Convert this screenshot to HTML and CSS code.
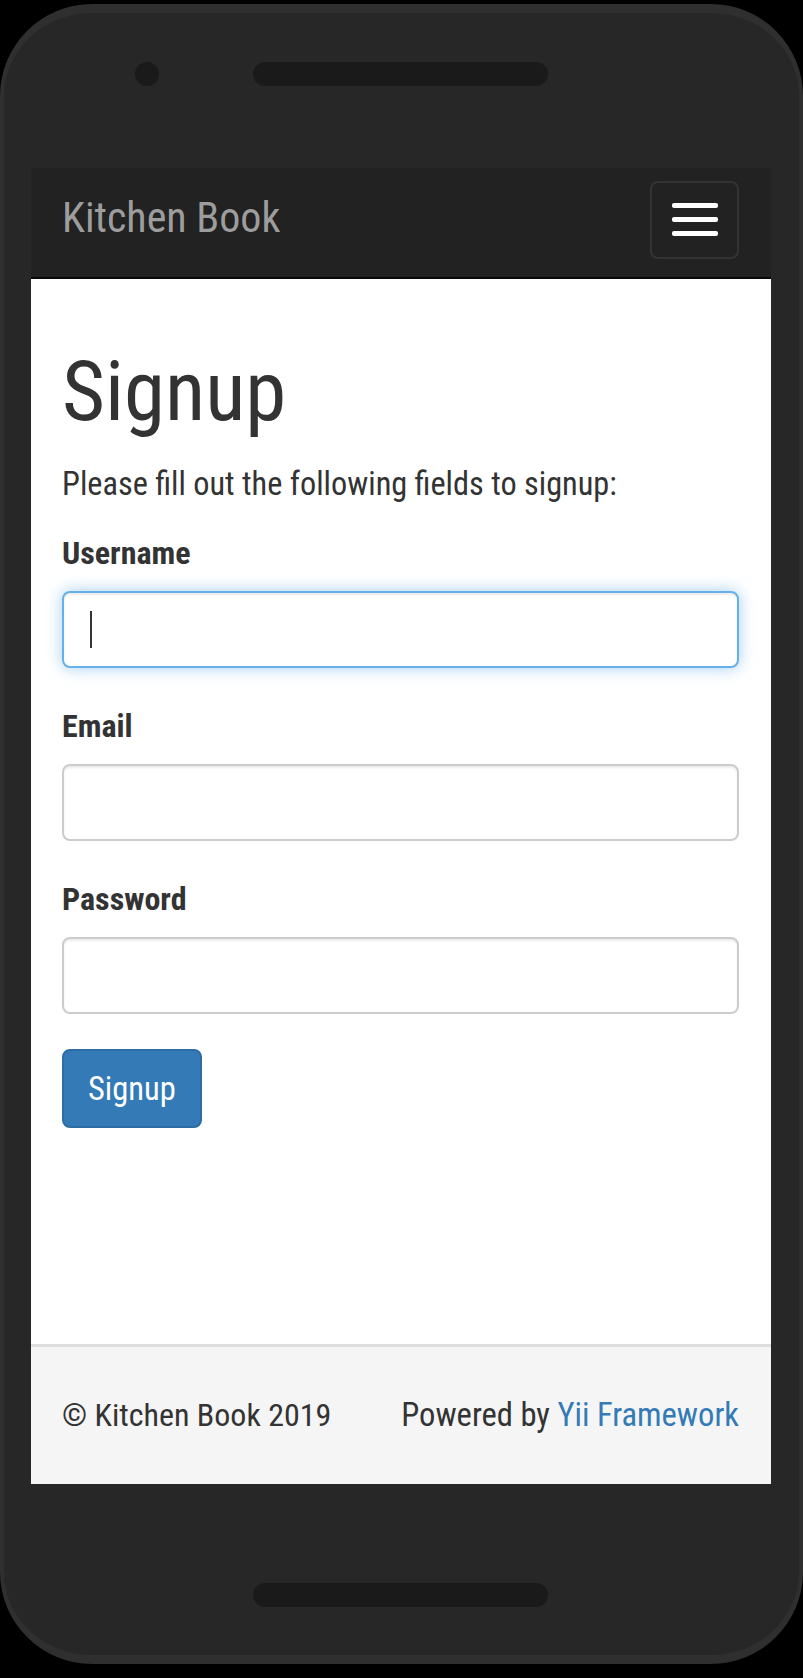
FILE: index.html
```html
<!DOCTYPE html>
<html lang="en">
<head>
<meta charset="utf-8">
<title>Signup - Kitchen Book</title>
<link rel="stylesheet" href="styles.css">
</head>
<body>
<div class="phone">
  <div class="phone-top">
    <span class="camera"></span>
    <span class="speaker"></span>
  </div>
  <div class="screen">
    <nav class="navbar">
      <a class="brand" href="#">Kitchen Book</a>
      <button class="toggle" type="button" aria-label="Toggle navigation">
        <span class="bar"></span>
        <span class="bar"></span>
        <span class="bar"></span>
      </button>
    </nav>
    <main class="content">
      <h1 class="title">Signup</h1>
      <p class="lead">Please fill out the following fields to signup:</p>
      <form class="form">
        <div class="group">
          <label class="label" for="username">Username</label>
          <div class="field">
            <input class="input input-focus" id="username" type="text">
            <span class="caret"></span>
          </div>
        </div>
        <div class="group">
          <label class="label" for="email">Email</label>
          <input class="input" id="email" type="text">
        </div>
        <div class="group">
          <label class="label" for="password">Password</label>
          <input class="input" id="password" type="password">
        </div>
        <div class="group">
          <button class="btn" type="button">Signup</button>
        </div>
      </form>
    </main>
    <footer class="footer">
      <span class="copy">© Kitchen Book 2019</span>
      <span class="powered">Powered by <a class="link" href="#">Yii Framework</a></span>
    </footer>
  </div>
  <div class="phone-bottom">
    <span class="speaker"></span>
  </div>
</div>
</body>
</html>
```
FILE: styles.css
```css
* { box-sizing: border-box; }

html, body {
  margin: 0;
  padding: 0;
  background: #000;
}

body {
  font-family: "Roboto Condensed", Roboto, "Liberation Sans", sans-serif;
  color: #333;
}

.phone {
  width: 803px;
  height: 1660px;
  margin-top: 4px;
  background: #272727;
  border: 4px solid #2f2f2f;
  border-top-width: 9px;
  border-bottom-width: 9px;
  border-radius: 92px;
  display: flex;
  flex-direction: column;
}

.phone-top {
  height: 155px;
  padding-top: 49px;
  display: flex;
  align-items: flex-start;
}

.camera {
  width: 24px;
  height: 24px;
  border-radius: 50%;
  background: #1a1a1a;
  margin-left: 131px;
}

.speaker {
  width: 295px;
  height: 24px;
  border-radius: 12px;
  background: #1a1a1a;
  margin-left: 94px;
}

.screen {
  width: 740px;
  height: 1316px;
  margin-left: 27px;
  background: #fff;
  display: flex;
  flex-direction: column;
}

.navbar {
  height: 111px;
  background: #222;
  border-bottom: 2px solid #080808;
  display: flex;
  justify-content: space-between;
  align-items: flex-start;
  padding: 0 32px 0 31px;
}

.brand {
  font-size: 42px;
  line-height: 42px;
  margin-top: 29px;
  color: #9d9d9d;
  text-decoration: none;
}

.toggle {
  width: 89px;
  height: 78px;
  margin-top: 13px;
  background: transparent;
  border: 2px solid #333;
  border-radius: 8px;
  padding: 20px 0 0;
  display: flex;
  flex-direction: column;
  align-items: center;
  gap: 9px;
}

.bar {
  width: 46px;
  height: 5px;
  border-radius: 2px;
  background: #fff;
}

.content {
  flex: 1;
  padding: 0 32px 0 31px;
}

.title {
  font-size: 83px;
  line-height: 90px;
  font-weight: 400;
  margin: 68px 0 24px;
  color: #333;
}

.lead {
  font-size: 32.3px;
  line-height: 46px;
  margin: 0 0 23px;
}

.form { margin: 0; }

.group { margin-bottom: 35px; }

.label {
  display: block;
  font-size: 32px;
  line-height: 46px;
  font-weight: 700;
  margin-bottom: 15px;
}

.field { position: relative; }

.input {
  display: block;
  width: 100%;
  height: 77px;
  border: 2px solid #ccc;
  border-radius: 8px;
  background: #fff;
  box-shadow: inset 0 2px 2px rgba(0, 0, 0, .075);
  font-size: 32px;
  padding: 0 26px;
  outline: none;
}

.input-focus {
  border-color: #66afe9;
  box-shadow: inset 0 2px 2px rgba(0, 0, 0, .075), 0 0 16px rgba(102, 175, 233, .6);
}

.caret {
  position: absolute;
  left: 28px;
  top: 20px;
  width: 2px;
  height: 37px;
  background: #333;
}

.btn {
  height: 79px;
  padding: 0 24px;
  font-family: inherit;
  font-size: 32.5px;
  line-height: 46px;
  color: #fff;
  background: #337ab7;
  border: 2px solid #2e6da4;
  border-radius: 8px;
}

.footer {
  height: 140px;
  border-top: 3px solid #ddd;
  background: #f5f5f5;
  padding: 45px 32px 0 31px;
  display: flex;
  justify-content: space-between;
  font-size: 32px;
  line-height: 46px;
}

.powered { font-size: 32.6px; }

.link {
  color: #337ab7;
  text-decoration: none;
}

.phone-bottom {
  padding-top: 99px;
  display: flex;
}

.phone-bottom .speaker { margin-left: 249px; }
```
